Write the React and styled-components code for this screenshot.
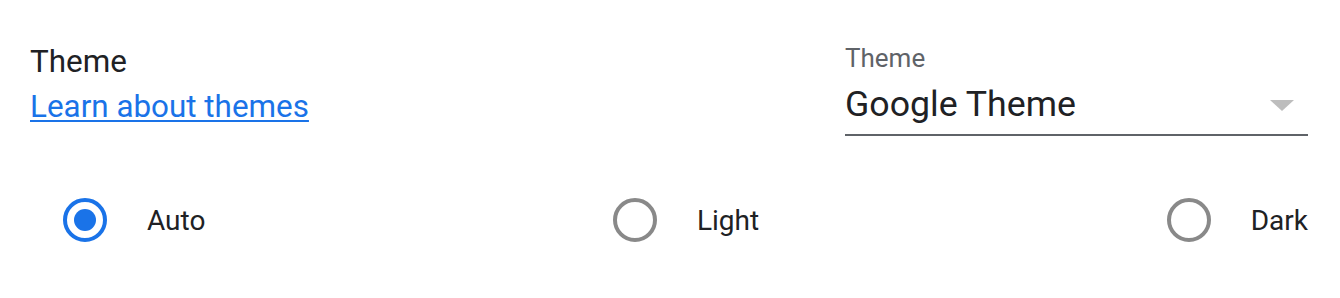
import React, { useState } from 'react'
import styled, { createGlobalStyle } from 'styled-components'

const GlobalStyle = createGlobalStyle`
  body {
    margin: 0;
    background: #ffffff;
    font-family: Roboto, "Noto Sans", sans-serif;
  }
`

const Wrapper = styled.section`
  width: 1340px;
  height: 298px;
  box-sizing: border-box;
  padding: 40px 32px 0 30px;
  display: flex;
  flex-direction: column;
`

const TopRow = styled.div`
  display: flex;
  justify-content: space-between;
  align-items: flex-start;
`

const Info = styled.div`
  display: flex;
  flex-direction: column;
  align-items: flex-start;
  padding-top: 2px;
`

const Title = styled.div`
  font-size: 31.4px;
  line-height: 40px;
  color: #202124;
`

const Link = styled.a`
  margin-top: 5px;
  font-size: 31.4px;
  line-height: 40px;
  color: #1a73e8;
  text-decoration: underline;
  text-underline-offset: 3px;
  text-decoration-thickness: 2px;
  cursor: pointer;
`

const Select = styled.div`
  width: 463px;
  padding-top: 2px;
  display: flex;
  flex-direction: column;
`

const SelectLabel = styled.div`
  font-size: 26px;
  line-height: 32px;
  color: #5f6368;
`

const SelectField = styled.div`
  display: flex;
  align-items: center;
  justify-content: space-between;
  height: 60px;
  border-bottom: 2px solid #5f6368;
`

const SelectValue = styled.span`
  font-size: 35.7px;
  color: #202124;
`

const Arrow = styled.span`
  width: 0;
  height: 0;
  margin: 3px 14px 0 0;
  border-left: 12px solid transparent;
  border-right: 12px solid transparent;
  border-top: 11px solid #bdbdbd;
`

const RadioRow = styled.div`
  display: flex;
  justify-content: space-between;
  align-items: center;
  padding-left: 33px;
  margin-top: 62px;
`

const Option = styled.label`
  display: flex;
  align-items: center;
  gap: 40px;
  cursor: pointer;
`

const Circle = styled.span`
  width: 44px;
  height: 44px;
  box-sizing: border-box;
  border-radius: 50%;
  border: 4px solid ${({ $checked }) => ($checked ? '#1a73e8' : '#898989')};
  display: flex;
  align-items: center;
  justify-content: center;

  &::after {
    content: '';
    width: 22px;
    height: 22px;
    border-radius: 50%;
    background: #1a73e8;
    display: ${({ $checked }) => ($checked ? 'block' : 'none')};
  }
`

const OptionText = styled.span`
  font-size: 28px;
  color: #202124;
`

const options = ['Auto', 'Light', 'Dark']

export default function App() {
  const [mode, setMode] = useState('Auto')
  return (
    <>
      <GlobalStyle />
      <Wrapper>
        <TopRow>
          <Info>
            <Title>Theme</Title>
            <Link>Learn about themes</Link>
          </Info>
          <Select>
            <SelectLabel>Theme</SelectLabel>
            <SelectField>
              <SelectValue>Google Theme</SelectValue>
              <Arrow />
            </SelectField>
          </Select>
        </TopRow>
        <RadioRow>
          {options.map((o) => (
            <Option key={o} onClick={() => setMode(o)}>
              <Circle $checked={mode === o} />
              <OptionText>{o}</OptionText>
            </Option>
          ))}
        </RadioRow>
      </Wrapper>
    </>
  )
}
